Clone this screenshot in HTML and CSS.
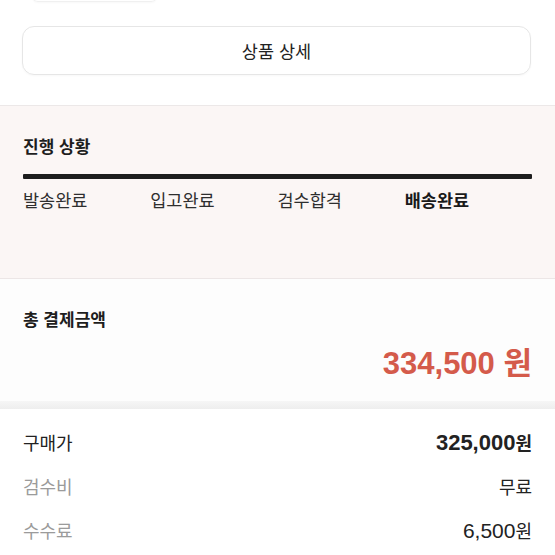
FILE: index.html
```html
<!DOCTYPE html>
<html lang="ko">
<head>
<meta charset="utf-8">
<link rel="stylesheet" href="styles.css">
</head>
<body>
<div class="stub"></div>
<div class="detail-btn">상품 상세</div>

<section class="progress">
  <h2 class="title">진행 상황</h2>
  <div class="bar"></div>
  <div class="steps">
    <span>발송완료</span>
    <span>입고완료</span>
    <span>검수합격</span>
    <span class="current">배송완료</span>
  </div>
</section>

<section class="pay">
  <h2 class="title">총 결제금액</h2>
  <div class="total">334,500 원</div>
</section>

<div class="divider"></div>

<section class="rows">
  <div class="row"><span class="label strong">구매가</span><span class="value bold"><span class="num">325,000</span>원</span></div>
  <div class="row"><span class="label">검수비</span><span class="value">무료</span></div>
  <div class="row"><span class="label">수수료</span><span class="value"><span class="num">6,500</span>원</span></div>
</section>
</body>
</html>
```

FILE: styles.css
```css
* { box-sizing: border-box; }
html, body { margin: 0; padding: 0; background: #fff; }
body {
  width: 555px;
  height: 555px;
  overflow: hidden;
  font-family: "Liberation Sans", "Noto Sans CJK KR", sans-serif;
  color: #222;
}
.stub {
  margin: -10px 0 0 32px;
  width: 125px;
  height: 12px;
  border-bottom: 1px solid #f0f0f0;
  border-radius: 0 0 6px 6px;
  box-shadow: 0 1px 2px rgba(0, 0, 0, 0.03);
}
.detail-btn {
  margin: 24px 24px 0 22px;
  height: 49px;
  border: 1px solid #e6e6e6;
  border-radius: 12px;
  box-shadow: 0 1px 2px rgba(0, 0, 0, 0.03);
  display: flex;
  align-items: center;
  justify-content: center;
  font-size: 17.5px;
  color: #222;
}
.title {
  margin: 0;
  font-size: 17px;
  line-height: 22px;
  font-weight: 700;
  color: #1e1e1e;
}
.progress {
  margin-top: 30px;
  height: 174px;
  border-top: 1px solid #ece8e8;
  border-bottom: 1px solid #ece6e6;
  background: #fbf6f5;
  padding: 31px 23px 0 23px;
}
.bar {
  margin-top: 15px;
  height: 5px;
  background: #1d1d1d;
  border-radius: 1px;
}
.steps {
  margin-top: 11px;
  display: grid;
  grid-template-columns: repeat(4, 1fr);
  font-size: 17.5px;
  line-height: 22px;
  color: #2e2e2e;
}
.steps .current { font-weight: 700; color: #1a1a1a; }
.pay {
  height: 122px;
  background: #fdfdfd;
  padding: 31px 23px 0 23px;
}
.total {
  margin-top: 14px;
  text-align: right;
  font-size: 31px;
  line-height: 36px;
  font-weight: 700;
  color: #d45b4b;
}
.divider {
  height: 8px;
  background: linear-gradient(#f6f6f6, #eeeeee);
}
.rows {
  padding: 11px 23px 0 23px;
}
.row {
  display: flex;
  justify-content: space-between;
  align-items: center;
  height: 44px;
  font-size: 18px;
}
.label { color: #9b9b9b; }
.label.strong { color: #222; }
.value { color: #222; }
.value .num { font-size: 21px; }
.value.bold { font-weight: 700; }
.value.bold .num { font-size: 22px; }
```
